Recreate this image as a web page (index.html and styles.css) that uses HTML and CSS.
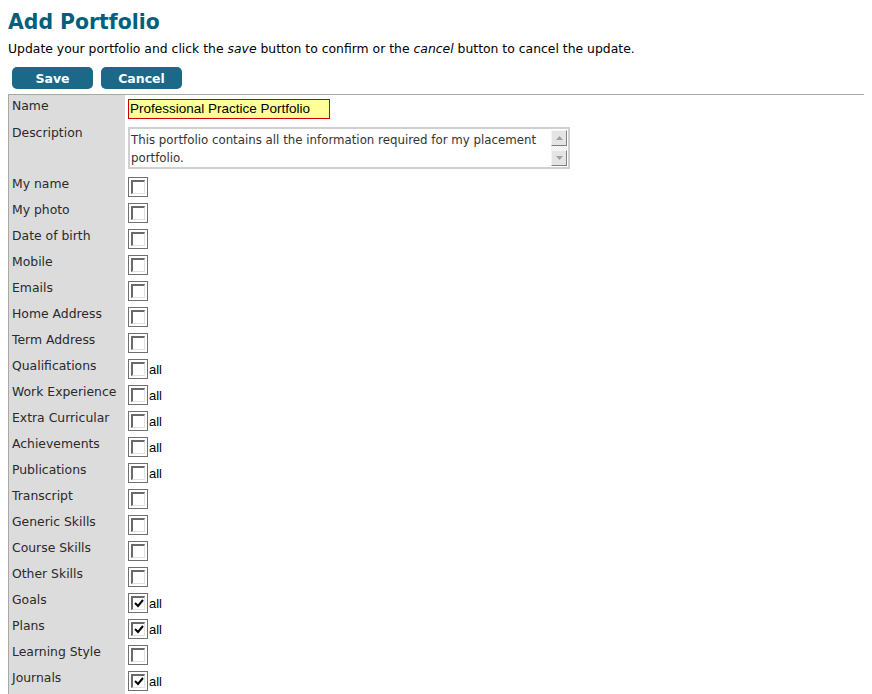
FILE: index.html
```html
<!DOCTYPE html>
<html>
<head>
<meta charset="utf-8">
<title>Add Portfolio</title>
<link rel="stylesheet" href="styles.css">
</head>
<body>
<h1 class="title">Add Portfolio</h1>
<p class="intro">Update your portfolio and click the <em>save</em> button to confirm or the <em>cancel</em> button to cancel the update.</p>
<div class="actions">
  <button class="btn">Save</button>
  <button class="btn">Cancel</button>
</div>
<table class="form">
  <tr class="row-name">
    <th>Name</th>
    <td><span class="name-input">Professional Practice Portfolio</span></td>
  </tr>
  <tr class="row-desc">
    <th>Description</th>
    <td>
      <div class="textarea">
        <div class="ta-text">This portfolio contains all the information required for my placement portfolio.</div>
        <div class="scrollbar">
          <span class="sb-btn"><svg width="7" height="4" viewBox="0 0 7 4"><path d="M3.5 0 L7 4 L0 4 Z" fill="#a0a0a0"/></svg></span>
          <span class="sb-track"></span>
          <span class="sb-btn"><svg width="7" height="4" viewBox="0 0 7 4"><path d="M0 0 L7 0 L3.5 4 Z" fill="#a0a0a0"/></svg></span>
        </div>
      </div>
    </td>
  </tr>
  <tr><th>My name</th><td><div class="cell"><span class="cb"><span class="cbi"></span></span></div></td></tr>
  <tr><th>My photo</th><td><div class="cell"><span class="cb"><span class="cbi"></span></span></div></td></tr>
  <tr><th>Date of birth</th><td><div class="cell"><span class="cb"><span class="cbi"></span></span></div></td></tr>
  <tr><th>Mobile</th><td><div class="cell"><span class="cb"><span class="cbi"></span></span></div></td></tr>
  <tr><th>Emails</th><td><div class="cell"><span class="cb"><span class="cbi"></span></span></div></td></tr>
  <tr><th>Home Address</th><td><div class="cell"><span class="cb"><span class="cbi"></span></span></div></td></tr>
  <tr><th>Term Address</th><td><div class="cell"><span class="cb"><span class="cbi"></span></span></div></td></tr>
  <tr><th>Qualifications</th><td><div class="cell"><span class="cb"><span class="cbi"></span></span><span class="all">all</span></div></td></tr>
  <tr><th>Work Experience</th><td><div class="cell"><span class="cb"><span class="cbi"></span></span><span class="all">all</span></div></td></tr>
  <tr><th>Extra Curricular</th><td><div class="cell"><span class="cb"><span class="cbi"></span></span><span class="all">all</span></div></td></tr>
  <tr><th>Achievements</th><td><div class="cell"><span class="cb"><span class="cbi"></span></span><span class="all">all</span></div></td></tr>
  <tr><th>Publications</th><td><div class="cell"><span class="cb"><span class="cbi"></span></span><span class="all">all</span></div></td></tr>
  <tr><th>Transcript</th><td><div class="cell"><span class="cb"><span class="cbi"></span></span></div></td></tr>
  <tr><th>Generic Skills</th><td><div class="cell"><span class="cb"><span class="cbi"></span></span></div></td></tr>
  <tr><th>Course Skills</th><td><div class="cell"><span class="cb"><span class="cbi"></span></span></div></td></tr>
  <tr><th>Other Skills</th><td><div class="cell"><span class="cb"><span class="cbi"></span></span></div></td></tr>
  <tr><th>Goals</th><td><div class="cell"><span class="cb"><span class="cbi"><svg width="10" height="10" viewBox="0 0 10 10"><path d="M1 4 L4 7 L9 1" stroke="#000" stroke-width="2" fill="none"/></svg></span></span><span class="all">all</span></div></td></tr>
  <tr><th>Plans</th><td><div class="cell"><span class="cb"><span class="cbi"><svg width="10" height="10" viewBox="0 0 10 10"><path d="M1 4 L4 7 L9 1" stroke="#000" stroke-width="2" fill="none"/></svg></span></span><span class="all">all</span></div></td></tr>
  <tr><th>Learning Style</th><td><div class="cell"><span class="cb"><span class="cbi"></span></span></div></td></tr>
  <tr class="row-last"><th>Journals</th><td><div class="cell"><span class="cb"><span class="cbi"><svg width="10" height="10" viewBox="0 0 10 10"><path d="M1 4 L4 7 L9 1" stroke="#000" stroke-width="2" fill="none"/></svg></span></span><span class="all">all</span></div></td></tr>
</table>
</body>
</html>
```
FILE: styles.css
```css
body {
  margin: 8px;
  font-family: "DejaVu Sans", Verdana, sans-serif;
  font-size: 12.4px;
  color: #000;
  background: #fff;
}
.title {
  margin: 0;
  padding-top: 2px;
  font-size: 20.4px;
  line-height: 24px;
  font-weight: bold;
  color: #005f7d;
}
.intro {
  margin: 7px 0 0 0;
  line-height: 15px;
}
.actions {
  display: flex;
  gap: 8px;
  margin: 11px 0 5px 4px;
}
.btn {
  width: 81px;
  height: 22px;
  border: 0;
  border-radius: 5px;
  background: #1b6888;
  color: #fff;
  font-family: "DejaVu Sans", Verdana, sans-serif;
  font-size: 12.5px;
  font-weight: bold;
  padding: 0;
}
.form {
  width: 858px;
  border: 1px solid #a8a8a8;
  border-collapse: collapse;
}
.form th, .form td {
  padding: 4px 3px 2px 3px;
  vertical-align: top;
  text-align: left;
  height: 20px;
}
.form th {
  width: 110px;
  background: #dcdcdc;
  font-weight: normal;
  color: #2a2a2a;
  line-height: 14px;
  white-space: nowrap;
}
.cell {
  display: flex;
  align-items: flex-end;
  height: 20px;
}
.row-name th, .row-name td { height: 21px; }
.row-desc th, .row-desc td { height: 45px; }
.row-last th, .row-last td { height: 40px; }
.name-input {
  display: block;
  width: 199px;
  height: 18px;
  border: 1px solid #c80000;
  background: #ffff99;
  font-family: "Liberation Sans", Arial, sans-serif;
  font-size: 13.5px;
  line-height: 18px;
  padding-left: 1px;
  white-space: nowrap;
}
.textarea {
  margin-top: 1px;
  width: 438px;
  height: 38px;
  border: 2px solid #d0d0d0;
  display: flex;
}
.ta-text {
  flex: 1;
  padding: 2px 14px 0 1px;
  font-size: 11.8px;
  line-height: 18px;
  color: #333;
}
.scrollbar {
  width: 16px;
  display: flex;
  flex-direction: column;
  padding: 1px 1px 1px 0;
}
.sb-btn {
  width: 14px;
  height: 14px;
  background: #e4e4e4;
  border: 1px solid;
  border-color: #f4f4f4 #808080 #808080 #f4f4f4;
  display: flex;
  align-items: center;
  justify-content: center;
}
.sb-track {
  flex: 1;
  background: repeating-conic-gradient(#e8e8e8 0 25%, #fff 0 50%) 0 0 / 2px 2px;
}
.cb {
  width: 18px;
  height: 18px;
  border: 1px solid #707070;
  display: flex;
  align-items: center;
  justify-content: center;
  background: #fff;
}
.cbi {
  width: 11px;
  height: 11px;
  border-style: solid;
  border-width: 2px 1px 1px 2px;
  border-color: #6a6a6a #e0e0e0 #e0e0e0 #6a6a6a;
  background: #fff;
  display: flex;
  align-items: center;
  justify-content: center;
}
.all {
  font-family: "Liberation Sans", Arial, sans-serif;
  font-size: 13px;
  line-height: 14px;
  margin-left: 1px;
  margin-bottom: 2px;
}
```
